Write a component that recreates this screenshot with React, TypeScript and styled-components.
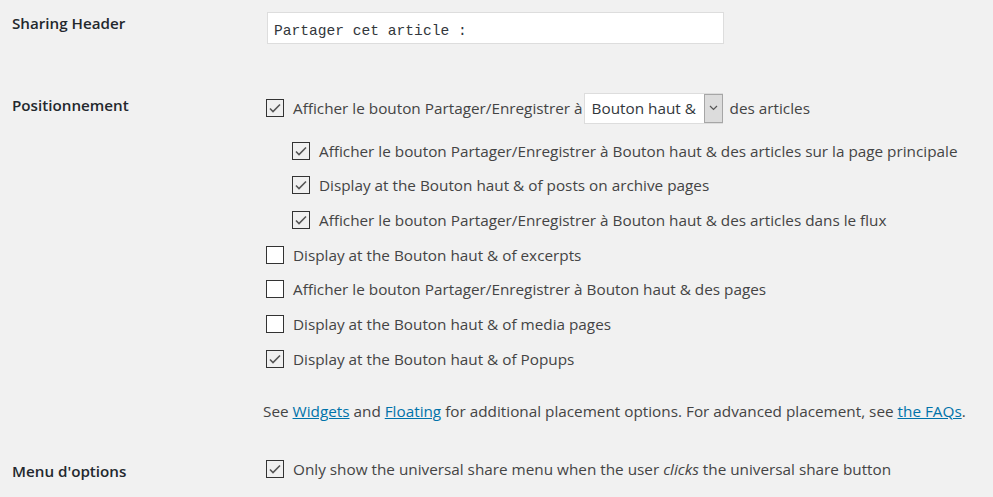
import React from 'react';
import styled, { createGlobalStyle } from 'styled-components';

const GlobalStyle = createGlobalStyle`
  html, body {
    margin: 0;
    padding: 0;
    background: #f1f1f1;
  }
  body {
    font-family: 'Open Sans', 'Noto Sans', Arial, sans-serif;
    font-size: 15.3px;
    color: #444;
  }
`;

const Page = styled.div`
  width: 993px;
  height: 497px;
  overflow: hidden;
  padding-left: 12px;
  box-sizing: border-box;
`;

const Row = styled.div<{ $top: number; $bottom: number }>`
  display: grid;
  grid-template-columns: 251px 1fr;
  padding-top: ${(p) => p.$top}px;
  padding-bottom: ${(p) => p.$bottom}px;
`;

const Label = styled.div<{ $offset: number }>`
  font-weight: 600;
  font-size: 15.2px;
  line-height: 20px;
  color: #23282d;
  padding-top: ${(p) => p.$offset}px;
`;

const Field = styled.div`
  display: flex;
  flex-direction: column;
`;

const TextInput = styled.input`
  width: 457px;
  height: 32px;
  box-sizing: border-box;
  margin: 0 0 0 4px;
  border: 1px solid #ddd;
  background: #fff;
  padding: 5px 6px 0;
  font-family: 'Liberation Mono', 'DejaVu Sans Mono', monospace;
  font-size: 14.6px;
  color: #32373c;
  outline: none;
`;

const OptionList = styled.div`
  display: flex;
  flex-direction: column;
  gap: 14.67px;
`;

const Option = styled.label<{ $nested?: boolean; $tall?: boolean }>`
  display: flex;
  align-items: center;
  height: ${(p) => (p.$tall ? 32 : 20)}px;
  margin-left: ${(p) => (p.$nested ? 29 : 3)}px;
  margin-bottom: ${(p) => (p.$tall ? 2 : 0)}px;
  line-height: 20px;
  white-space: nowrap;
`;

const Box = styled.span<{ $checked: boolean }>`
  flex: none;
  width: 18px;
  height: 18px;
  box-sizing: border-box;
  border: 1px solid #333;
  background: ${(p) => (p.$checked ? '#f0f0f0' : '#fff')};
  margin-right: 9px;
  display: flex;
  align-items: center;
  justify-content: center;
`;

const Select = styled.span`
  display: inline-flex;
  align-items: stretch;
  height: 31px;
  width: 139px;
  box-sizing: border-box;
  border: 1px solid #ddd;
  background: #fff;
  margin: 0 7px 0 1px;
`;

const SelectValue = styled.span`
  flex: 1;
  display: flex;
  align-items: center;
  padding-left: 7px;
  color: #32373c;
  overflow: hidden;
`;

const SelectArrow = styled.span`
  width: 17px;
  background: #dcdcdc;
  border: 1px solid #a6a6a6;
  margin: 0 -1px 0 0;
  display: flex;
  align-items: center;
  justify-content: center;
`;

const Note = styled.p`
  margin: 32px 0 0 0;
  line-height: 20px;
`;

const Link = styled.a`
  color: #0073aa;
  text-decoration: underline;
`;

const Check = ({ checked }: { checked: boolean }) => (
  <Box $checked={checked}>
    {checked && (
      <svg width="14" height="14" viewBox="0 0 14 14">
        <path d="M2 7.5 L5 10.5 L12 3.5" fill="none" stroke="#555" strokeWidth="1.6" />
      </svg>
    )}
  </Box>
);

const options: { text: React.ReactNode; checked: boolean; nested?: boolean }[] = [
  { text: 'Afficher le bouton Partager/Enregistrer à Bouton haut & des articles sur la page principale', checked: true, nested: true },
  { text: 'Display at the Bouton haut & of posts on archive pages', checked: true, nested: true },
  { text: 'Afficher le bouton Partager/Enregistrer à Bouton haut & des articles dans le flux', checked: true, nested: true },
  { text: 'Display at the Bouton haut & of excerpts', checked: false },
  { text: 'Afficher le bouton Partager/Enregistrer à Bouton haut & des pages', checked: false },
  { text: 'Display at the Bouton haut & of media pages', checked: false },
  { text: 'Display at the Bouton haut & of Popups', checked: true },
];

export default function App() {
  return (
    <Page>
      <GlobalStyle />
      <Row $top={12} $bottom={37}>
        <Label $offset={1}>Sharing Header</Label>
        <Field>
          <TextInput defaultValue="Partager cet article :" />
        </Field>
      </Row>
      <Row $top={11} $bottom={0}>
        <Label $offset={3}>Positionnement</Label>
        <Field>
          <OptionList>
            <Option $tall>
              <Check checked />
              Afficher le bouton Partager/Enregistrer à
              <Select>
                <SelectValue>Bouton haut &amp;</SelectValue>
                <SelectArrow>
                  <svg width="9" height="6" viewBox="0 0 9 6">
                    <path d="M1 1 L4.5 4.5 L8 1" fill="none" stroke="#555" strokeWidth="1.2" />
                  </svg>
                </SelectArrow>
              </Select>
              des articles
            </Option>
            {options.map((o, i) => (
              <Option key={i} $nested={o.nested}>
                <Check checked={o.checked} />
                {o.text}
              </Option>
            ))}
          </OptionList>
          <Note>
            See <Link href="#">Widgets</Link> and <Link href="#">Floating</Link> for additional placement options. For
            advanced placement, see <Link href="#">the FAQs</Link>.
          </Note>
        </Field>
      </Row>
      <Row $top={38} $bottom={0}>
        <Label $offset={2}>Menu d'options</Label>
        <Field>
          <Option>
            <Check checked />
            Only show the universal share menu when the user&nbsp;<em>clicks</em>&nbsp;the universal share button
          </Option>
        </Field>
      </Row>
    </Page>
  );
}
